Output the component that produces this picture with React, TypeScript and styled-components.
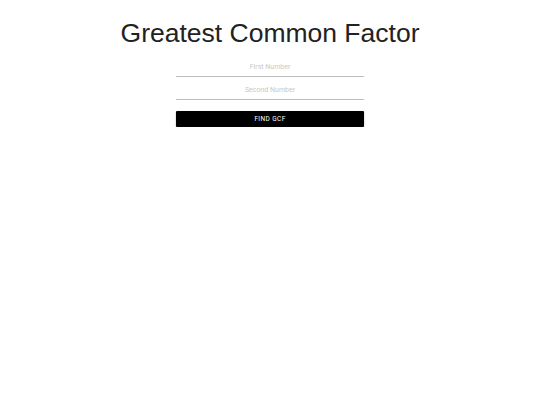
import React, { useState } from 'react';
import styled, { createGlobalStyle } from 'styled-components';

const GlobalStyle = createGlobalStyle`
  html, body {
    margin: 0;
    padding: 0;
    background: #ffffff;
  }
  body {
    font-family: 'Liberation Sans', Arial, sans-serif;
  }
`;

const Page = styled.div`
  display: flex;
  flex-direction: column;
  align-items: center;
  padding-top: 18px;
`;

const Title = styled.h1`
  margin: 0 0 6px;
  font-family: 'Liberation Sans', Arial, Helvetica, sans-serif;
  font-weight: 400;
  font-size: 26.5px;
  line-height: 30px;
  color: #222222;
`;

const Form = styled.form`
  display: flex;
  flex-direction: column;
  width: 188px;
`;

const Field = styled.input`
  box-sizing: border-box;
  width: 100%;
  height: 23px;
  padding: 4px 0 0;
  margin: 0;
  border: none;
  border-bottom: 1px solid #bdbdbd;
  outline: none;
  background: transparent;
  font-family: Roboto, 'Liberation Sans', sans-serif;
  font-size: 7px;
  line-height: 18px;
  color: #333333;
  text-align: center;

  &::placeholder {
    color: #c8c8c8;
  }
`;

const Button = styled.button`
  margin-top: 11px;
  height: 16px;
  width: 100%;
  border: none;
  border-radius: 1px;
  background: #000000;
  color: #ffffff;
  font-family: Roboto, 'Liberation Sans', sans-serif;
  font-weight: 400;
  font-size: 6.5px;
  letter-spacing: 0.06em;
  text-transform: uppercase;
  box-shadow: 0 1px 2px rgba(0, 0, 0, 0.3);
  cursor: pointer;
`;

const gcd = (a: number, b: number): number => (b === 0 ? Math.abs(a) : gcd(b, a % b));

export default function App() {
  const [first, setFirst] = useState('');
  const [second, setSecond] = useState('');

  const onSubmit = (e: React.FormEvent) => {
    e.preventDefault();
    const a = parseInt(first, 10);
    const b = parseInt(second, 10);
    if (!isNaN(a) && !isNaN(b)) {
      alert(gcd(a, b));
    }
  };

  return (
    <>
      <GlobalStyle />
      <Page>
        <Title>Greatest Common Factor</Title>
        <Form onSubmit={onSubmit}>
          <Field placeholder="First Number" value={first} onChange={(e) => setFirst(e.target.value)} />
          <Field placeholder="Second Number" value={second} onChange={(e) => setSecond(e.target.value)} />
          <Button type="submit">Find GCF</Button>
        </Form>
      </Page>
    </>
  );
}
